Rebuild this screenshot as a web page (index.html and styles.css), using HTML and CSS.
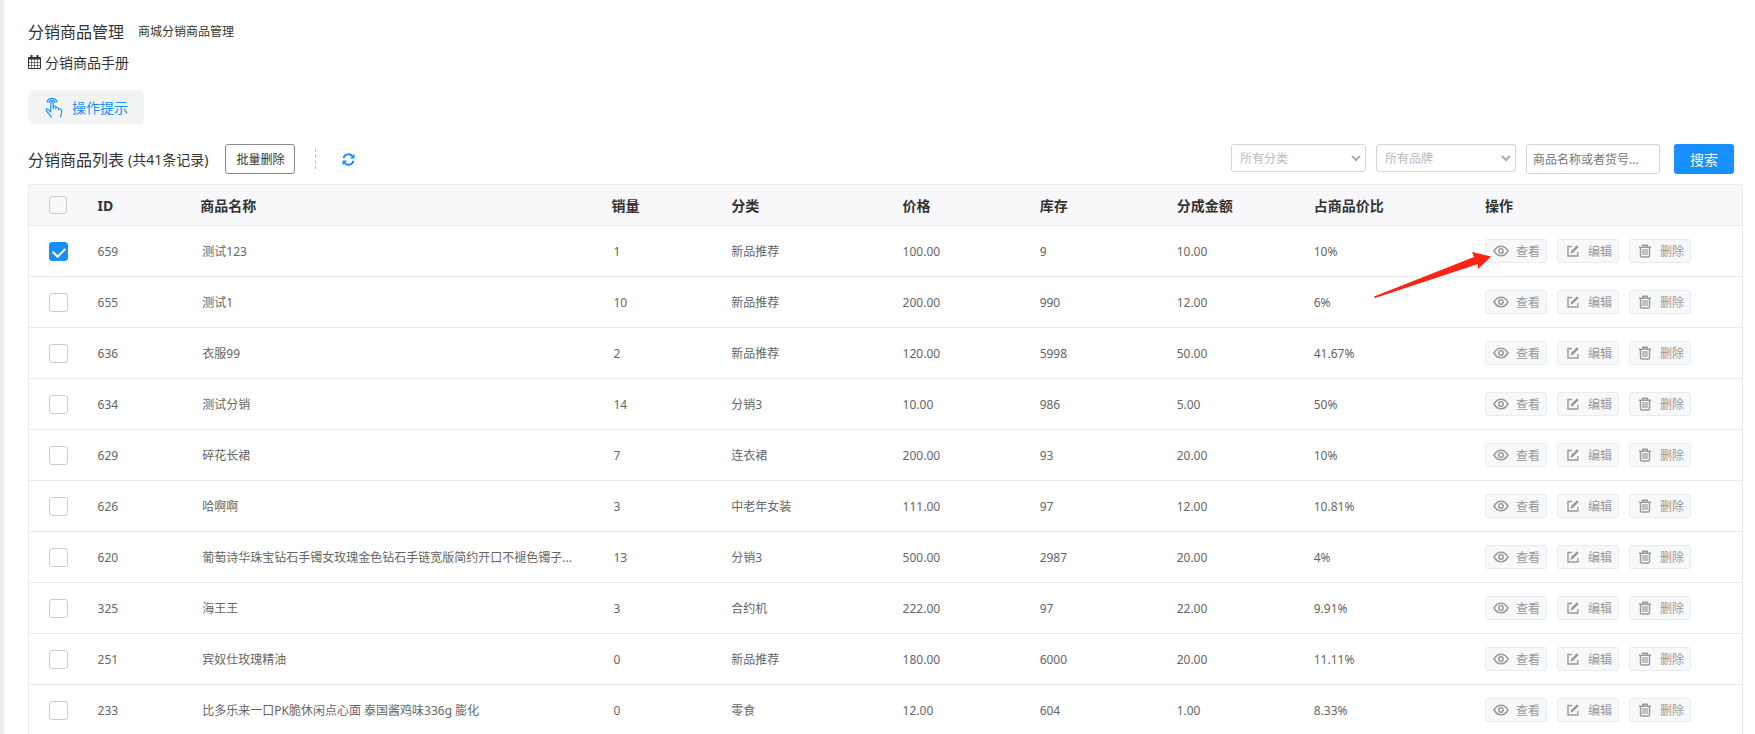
FILE: index.html
```html
<!DOCTYPE html>
<html lang="zh-CN">
<head>
  <meta charset="UTF-8" />
  <meta name="viewport" content="width=device-width, initial-scale=1.0"/>
  <title>分销商品管理</title>
  <link rel="stylesheet" href="styles.css">
</head>
<body>
  <svg class="sprite" aria-hidden="true">
    <symbol id="icon-eye" viewBox="0 0 16 12">
      <path d="M1 6C3 2.600 5.300 1.200 8 1.200S13 2.600 15 6C13 9.400 10.700 10.800 8 10.800S3 9.400 1 6Z" fill="none" stroke="currentColor" stroke-width="1.500"/>
      <circle cx="8" cy="6" r="2.200" fill="none" stroke="currentColor" stroke-width="1.500"/>
    </symbol>
    <symbol id="icon-edit" viewBox="0 0 12 12">
      <path d="M5 1.500H1V11H10.800V7" fill="none" stroke="currentColor" stroke-width="1.400"/>
      <path d="M10 .3L11.800 2 6.300 7.500 3.300 8.700 4.300 5.800Z" fill="currentColor"/>
    </symbol>
    <symbol id="icon-trash" viewBox="0 0 12 14">
      <path d="M0 3.200H12M3.800 3V1.200H8.200V3M1.500 3.500V11.500Q1.500 13 3 13H9Q10.500 13 10.500 11.500V3.500" fill="none" stroke="currentColor" stroke-width="1.400"/>
      <path d="M3 5H9V11H3Z" fill="currentColor" opacity=".6"/>
    </symbol>
  </svg>

  <div class="page">
    <div class="page-title">
      <h1>分销商品管理</h1>
      <span>商城分销商品管理</span>
    </div>

    <a class="manual" href="#">
      <svg width="13" height="14" viewBox="0 0 13 14">
        <path d="M.5 2.500H12.500V13.500H.5Z" fill="none" stroke="currentColor"/>
        <path d="M1 2.500H12V4.500H1ZM2.500 0H4.500V4H2.500ZM8.500 0H10.500V4H8.500Z" fill="currentColor"/>
        <path d="M3.500 4V13M6.500 4V13M9.500 4V13M1 7.500H12M1 10.500H12" stroke="currentColor" stroke-width=".6"/>
      </svg>
      分销商品手册
    </a>

    <button type="button" class="tips-btn">
      <svg width="18" height="21" viewBox="0 0 18 21" fill="none" stroke="currentColor" stroke-width="1.100" stroke-linejoin="round">
        <path d="M2 5.500C2.800 0 11.200 0 12 5.500M4 6C4.200 2.300 9.800 2.300 10 6"/>
        <path d="M6.500 20.500C5 17.500 2 15.500 1.200 13.200C.8 11.800 2.200 11.300 3.200 12.400L5.800 15V6C5.800 4.200 8.200 4.200 8.200 6V11"/>
        <path d="M8.200 12V9.500C8.700 8.500 10.800 8.800 10.800 10.200V12.500M10.800 10.800C11.600 9.800 13.500 10.500 13.500 11.800V13.500M13.500 12.200C14.600 11.200 16.500 12 16.500 13.500V16.500C16.500 18 15.500 19 15.300 20.500"/>
      </svg>
      操作提示
    </button>

    <div class="toolbar">
      <h2>分销商品列表</h2>
      <span class="count">(共41条记录)</span>
      <button type="button" class="batch-btn">批量删除</button>
      <span class="divider"></span>
      <button type="button" class="refresh-btn" aria-label="刷新">
        <svg width="13" height="13" viewBox="0 0 13 13">
          <path d="M1.500 5.200A5 5 0 0 1 10.300 3.200M11.500 7.800A5 5 0 0 1 2.700 9.800" fill="none" stroke="currentColor" stroke-width="1.900"/>
          <path d="M12.500 .8V5.500H7.800ZM.5 12.200V7.500H5.200Z" fill="currentColor"/>
        </svg>
      </button>

      <form class="search-form">
        <div class="select-box category">
          <select aria-label="所有分类"><option>所有分类</option></select>
          <svg width="10" height="7" viewBox="0 0 10 7"><path d="M1 1L5 5 9 1" fill="none" stroke="currentColor" stroke-width="2"/></svg>
        </div>
        <div class="select-box brand">
          <select aria-label="所有品牌"><option>所有品牌</option></select>
          <svg width="10" height="7" viewBox="0 0 10 7"><path d="M1 1L5 5 9 1" fill="none" stroke="currentColor" stroke-width="2"/></svg>
        </div>
        <input type="text" class="keyword" placeholder="商品名称或者货号..." aria-label="商品名称或者货号" />
        <button type="button" class="search-btn">搜索</button>
      </form>
    </div>

    <table class="goods">
      <colgroup>
        <col class="w-check"><col class="w-id"><col class="w-name"><col class="w-sales"><col class="w-cat">
        <col class="w-num"><col class="w-num"><col class="w-num"><col class="w-ratio"><col class="w-ops">
      </colgroup>
      <thead>
        <tr>
          <th class="check"><input type="checkbox" aria-label="全选" /></th>
          <th>ID</th>
          <th>商品名称</th>
          <th>销量</th>
          <th>分类</th>
          <th>价格</th>
          <th>库存</th>
          <th>分成金额</th>
          <th>占商品价比</th>
          <th>操作</th>
        </tr>
      </thead>
      <tbody id="list"></tbody>
    </table>
  </div>

  <script>
    const goods = [
      ["659", "测试123", "1", "新品推荐", "100.00", "9", "10.00", "10%"],
      ["655", "测试1", "10", "新品推荐", "200.00", "990", "12.00", "6%"],
      ["636", "衣服99", "2", "新品推荐", "120.00", "5998", "50.00", "41.67%"],
      ["634", "测试分销", "14", "分销3", "10.00", "986", "5.00", "50%"],
      ["629", "碎花长裙", "7", "连衣裙", "200.00", "93", "20.00", "10%"],
      ["626", "哈啊啊", "3", "中老年女装", "111.00", "97", "12.00", "10.81%"],
      ["620", "葡萄诗华珠宝钻石手镯女玫瑰金色钻石手链宽版简约开口不褪色镯子...", "13", "分销3", "500.00", "2987", "20.00", "4%"],
      ["325", "海王王", "3", "合约机", "222.00", "97", "22.00", "9.91%"],
      ["251", "宾奴仕玫瑰精油", "0", "新品推荐", "180.00", "6000", "20.00", "11.11%"],
      ["233", "比多乐来一口PK脆休闲点心面 泰国酱鸡味336g 膨化", "0", "零食", "12.00", "604", "1.00", "8.33%"]
    ];

    const ops = `
      <div class="ops">
        <button type="button"><svg width="16" height="12"><use href="#icon-eye"/></svg>查看</button>
        <button type="button"><svg width="12" height="12"><use href="#icon-edit"/></svg>编辑</button>
        <button type="button"><svg width="12" height="14"><use href="#icon-trash"/></svg>删除</button>
      </div>`;

    // 红色箭头，指向第一行的“查看”
    const arrow = `
      <svg class="arrow" width="118" height="46" viewBox="0 0 118 46">
        <path d="M0 44.500L100 5 98 0 117 4.500 104 17V12L1 46Z" fill="#ff2314"/>
      </svg>`;

    document.getElementById('list').innerHTML = goods.map((row, i) => `
      <tr>
        <td class="check"><input type="checkbox" aria-label="选择 ${row[0]}" ${i === 0 ? 'checked' : ''} /></td>
        ${row.map(text => `<td>${text}</td>`).join('')}
        <td class="ops-cell">${ops}${i === 0 ? arrow : ''}</td>
      </tr>`).join('');
  </script>
</body>
</html>
```

FILE: styles.css
```css
* {
  box-sizing: border-box;
}

body {
  margin: 0;
  background: #fff;
  color: #333;
  font-family: "Noto Sans", "Noto Sans CJK SC", sans-serif;
  font-size: 12px;
}

button, input, select {
  font-family: inherit;
  font-size: 12px;
  margin: 0;
}

button {
  cursor: pointer;
  padding: 0;
}

h1, h2 {
  margin: 0;
  font-size: 16px;
  font-weight: normal;
}

.sprite {
  display: none;
}

.page {
  height: 100vh;
  overflow: hidden;
  border-left: 4px solid #e9edf0;
  padding: 19px 12px 0 24px;
}

.page-title {
  display: flex;
  align-items: center;
  gap: 14px;
  height: 24px;
}

.manual {
  display: flex;
  align-items: center;
  gap: 4px;
  width: fit-content;
  height: 20px;
  margin-top: 9px;
  color: #333;
  font-size: 14px;
  text-decoration: none;
}

.tips-btn {
  display: flex;
  align-items: center;
  gap: 9px;
  height: 34px;
  margin-top: 18px;
  padding: 0 16px 0 17px;
  border: none;
  border-radius: 5px;
  background: #f2f4f4;
  color: #188fff;
  font-size: 14px;
}

/* 列表工具栏 */
.toolbar {
  display: flex;
  align-items: center;
  height: 30px;
  margin: 20px 0 10px;
}

.count {
  margin: 0 17px 0 4px;
  font-size: 14px;
}

.batch-btn {
  width: 70px;
  height: 30px;
  border: 1px solid #888;
  border-radius: 3px;
  background: #fff;
  color: #333;
}

.divider {
  height: 20px;
  margin: 0 26px 0 20px;
  border-left: 1px dashed #bbb;
}

.refresh-btn {
  display: flex;
  border: none;
  background: none;
  color: #188fff;
}

.search-form {
  display: flex;
  align-items: flex-start;
  gap: 10px;
  height: 30px;
  margin: 0 9px 0 auto;
}

.select-box {
  position: relative;
  width: 140px;
  color: #bbb;
}

.select-box.category {
  width: 135px;
}

.select-box select {
  appearance: none;
  display: block;
  width: 100%;
  height: 28px;
  padding: 0 24px 0 8px;
  border: 1px solid #d5d5d5;
  border-radius: 3px;
  background: #fff;
  color: #bbb;
}

.select-box svg {
  position: absolute;
  right: 5px;
  top: 11px;
  color: #aaa;
  pointer-events: none;
}

.keyword {
  width: 134px;
  height: 30px;
  padding: 0 6px;
  border: 1px solid #d5d5d5;
  border-radius: 3px;
}

.keyword::placeholder {
  color: #777;
}

.search-btn {
  width: 60px;
  height: 30px;
  margin-left: 4px;
  border: none;
  border-radius: 3px;
  background: #188fff;
  color: #fff;
  font-size: 14px;
}

/* 商品表格 */
.goods {
  width: 100%;
  table-layout: fixed;
  border: 1px solid #e9ebef;
  border-spacing: 0;
}

.w-check { width: 4%; }
.w-id { width: 6%; }
.w-name { width: 24%; }
.w-sales { width: 7%; }
.w-cat { width: 10%; }
.w-num { width: 8%; }
.w-ratio { width: 10%; }
.w-ops { width: 15%; }

.goods th,
.goods td {
  padding: 0;
  border-bottom: 1px solid #e9ebef;
  text-align: left;
  white-space: nowrap;
}

.goods th {
  height: 41px;
  background: #f8f8fa;
  font-size: 14px;
}

.goods td {
  height: 51px;
  color: #666;
}

.goods td:nth-child(3),
.goods td:nth-child(4) {
  padding-left: 2px;
}

.goods .check {
  padding-left: 20px;
}

.check input {
  appearance: none;
  display: block;
  width: 19px;
  height: 19px;
  border: 1px solid #ccc;
  border-radius: 3px;
  background: #fff;
}

th.check input {
  width: 18px;
  height: 18px;
  background: none;
}

.check input:checked {
  border-color: #188fff;
  background: #188fff;
}

.check input:checked::before {
  content: "";
  display: block;
  width: 10px;
  height: 6px;
  margin: 4px 0 0 3px;
  border-left: 2px solid #fff;
  border-bottom: 2px solid #fff;
  transform: rotate(-45deg);
}

.goods .ops-cell {
  position: relative;
}

.ops {
  display: flex;
  gap: 10px;
}

.ops button {
  display: flex;
  align-items: center;
  justify-content: space-between;
  width: 62px;
  height: 24px;
  padding: 0 6px 0 7px;
  border: 1px solid #e9ebef;
  border-radius: 3px;
  background: #f6f8fa;
  color: #999;
}

.ops button + button {
  padding-left: 9px;
}

.arrow {
  position: absolute;
  left: -111px;
  top: 26px;
  pointer-events: none;
}
```
